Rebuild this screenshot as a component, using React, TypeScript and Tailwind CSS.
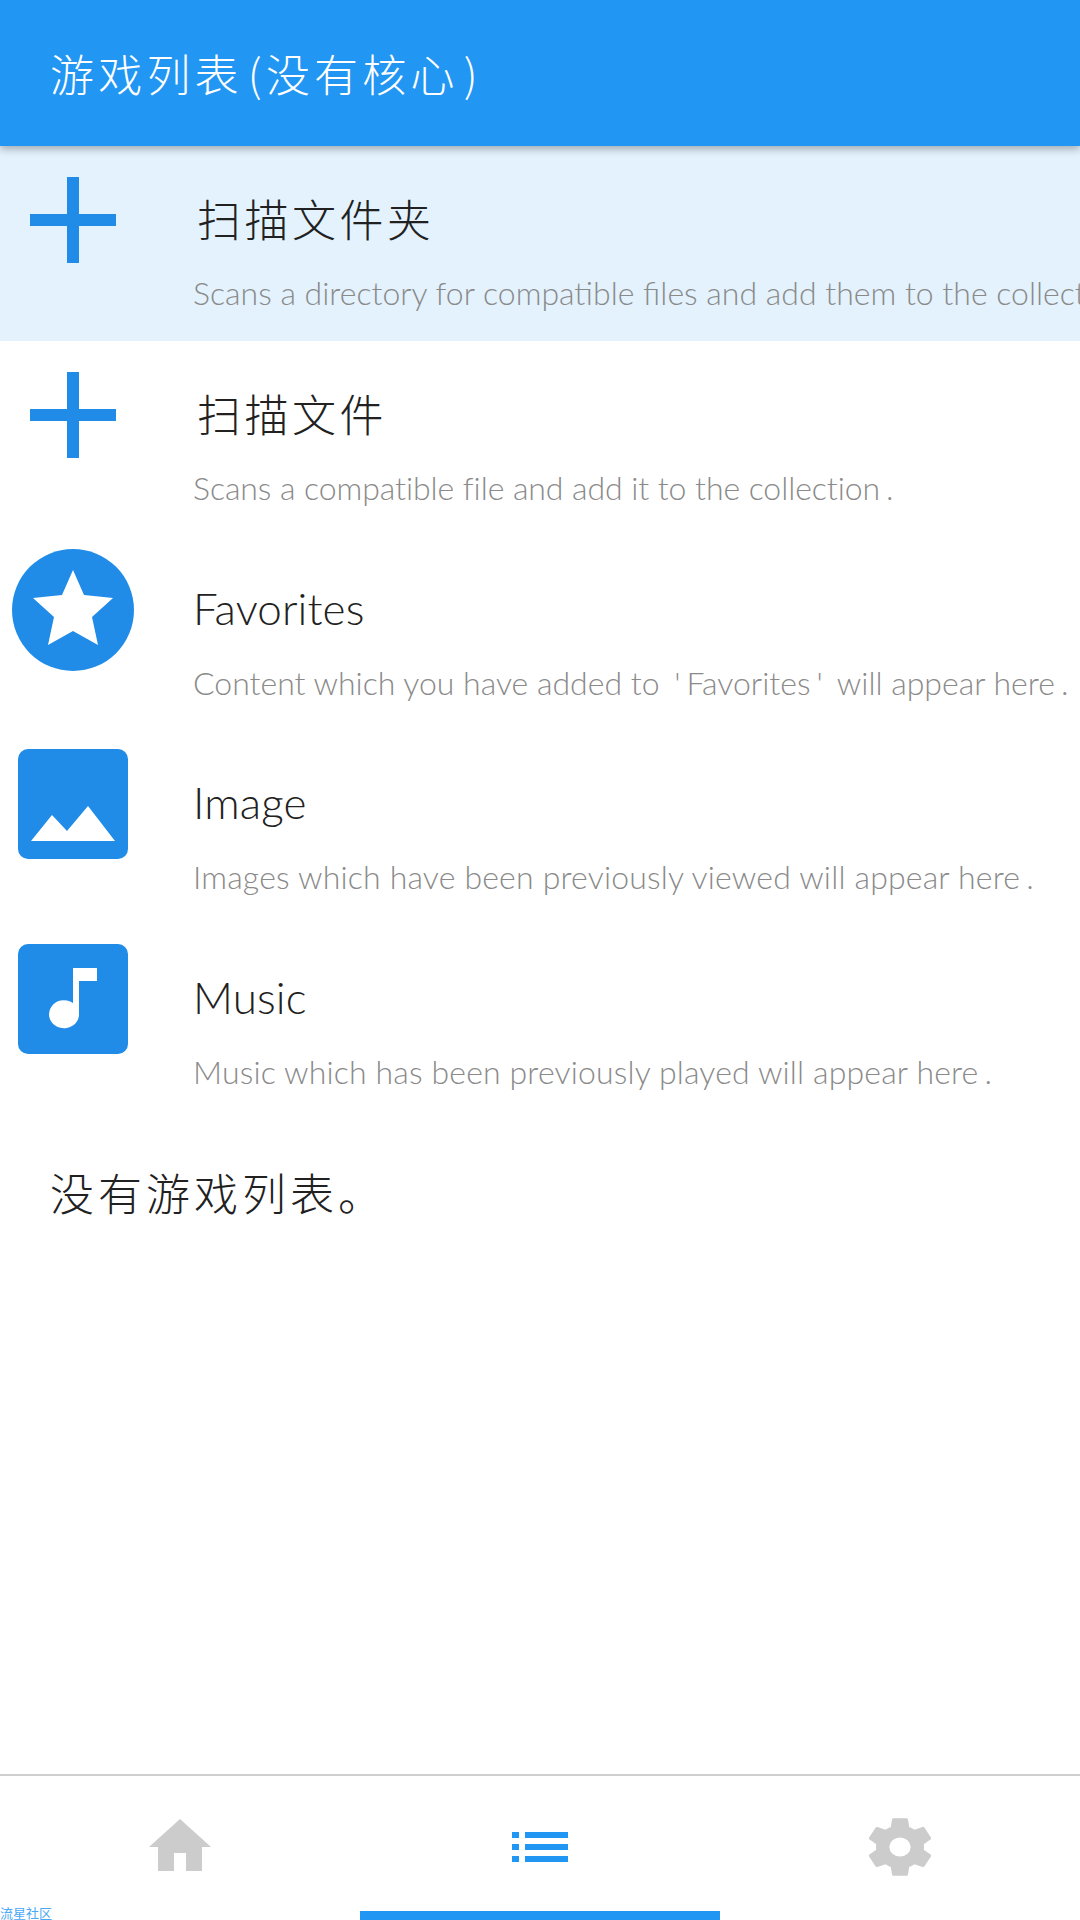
import React from "react";

const CJK = "font-['Noto_Sans_CJK_SC',sans-serif]";

interface RowData {
  title: string;
  desc: React.ReactNode;
  icon: React.ReactNode;
  active?: boolean;
  cjk?: boolean;
  tracking?: string;
}

const PlusIcon = () => (
  <svg width="86" height="86" viewBox="0 0 86 86" fill="#218ce8">
    <rect x="37" y="0" width="12" height="86" />
    <rect x="0" y="37" width="86" height="12" />
  </svg>
);

const StarIcon = () => (
  <svg width="122" height="122" viewBox="0 0 122 122">
    <circle cx="61" cy="61" r="61" fill="#218ce8" />
    <path d="M61 21 L72 46 L101 49 L80 68 L86 96 L61 82 L36 96 L42 68 L21 49 L50 46 Z" fill="#fff" />
  </svg>
);

const ImageIcon = () => (
  <svg width="110" height="110" viewBox="0 0 110 110">
    <rect width="110" height="110" rx="10" fill="#218ce8" />
    <path d="M13 92 L34 66 L49 82 L70 57 L97 92 Z" fill="#fff" />
  </svg>
);

const MusicIcon = () => (
  <svg width="110" height="110" viewBox="0 0 110 110">
    <rect width="110" height="110" rx="10" fill="#218ce8" />
    <path d="M55 24 H79 V37 H61 V71 A15 14 0 1 1 55 59 Z" fill="#fff" />
  </svg>
);

const Dot = () => <span className="ml-[6px]">.</span>;
const Quote = () => <span className="mx-[6px]">'</span>;

const rows: RowData[] = [
  {
    title: "扫描文件夹",
    desc: "Scans a directory for compatible files and add them to the collection.",
    icon: <PlusIcon />,
    active: true,
    cjk: true,
  },
  {
    title: "扫描文件",
    desc: (
      <>
        Scans a compatible file and add it to the collection
        <Dot />
      </>
    ),
    icon: <PlusIcon />,
    cjk: true,
    tracking: "tracking-[-0.07px]",
  },
  {
    title: "Favorites",
    desc: (
      <>
        Content which you have added to <Quote />
        Favorites
        <Quote /> will appear here
        <Dot />
      </>
    ),
    icon: <StarIcon />,
  },
  {
    title: "Image",
    desc: (
      <>
        Images which have been previously viewed will appear here
        <Dot />
      </>
    ),
    icon: <ImageIcon />,
    tracking: "tracking-[0.18px]",
  },
  {
    title: "Music",
    desc: (
      <>
        Music which has been previously played will appear here
        <Dot />
      </>
    ),
    icon: <MusicIcon />,
    tracking: "tracking-[0.15px]",
  },
];

const ListRow = ({ row }: { row: RowData }) => (
  <div className={`flex h-[194.75px] items-start overflow-hidden ${row.active ? "bg-[#e3f2fd]" : ""}`}>
    <div className="flex h-[148px] w-[146px] shrink-0 items-center justify-center">{row.icon}</div>
    <div className="ml-[47px] flex flex-col whitespace-nowrap pt-[42px]">
      <span
        className={
          row.cjk
            ? `${CJK} pl-[4px] text-[44px] leading-[60px] font-light tracking-[3.5px] text-[#212121]`
            : "font-['Lato',sans-serif] text-[44px] leading-[60px] font-light tracking-[0.1px] text-[#212121]"
        }
      >
        {row.title}
      </span>
      <span
        className={`mt-[23px] font-['Lato',sans-serif] text-[32px] leading-[44px] font-light text-[#8a8a8a] ${row.tracking ?? ""}`}
      >
        {row.desc}
      </span>
    </div>
  </div>
);

export default function App() {
  return (
    <div className="relative flex h-[1920px] w-[1080px] flex-col overflow-hidden bg-white">
      {/* Action bar */}
      <header className="z-10 flex h-[146px] shrink-0 items-center bg-[#2196f3] pl-[50px] shadow-[0_3px_8px_rgba(0,0,0,0.3)]">
        <h1 className={`${CJK} text-[44px] font-light tracking-[4.2px] text-white`}>
          游戏列表
          <span className="ml-[5px]">(</span>
          没有核心
          <span className="ml-[5px]">)</span>
        </h1>
      </header>

      <main className="flex-1">
        {rows.map((row) => (
          <ListRow key={row.title} row={row} />
        ))}
        <p className={`${CJK} mt-[42px] pl-[50px] text-[44px] leading-[60px] font-light tracking-[4px] text-[#212121]`}>
          没有游戏列表。
        </p>
      </main>

      {/* Bottom tabs */}
      <nav className="grid h-[146px] shrink-0 grid-cols-3 border-t-2 border-[#cfcfcf]">
        <div className="flex items-center justify-center pb-[6px]">
          <svg width="62" height="52" viewBox="0 0 62 52" fill="#cccccc">
            <path d="M31 0 L62 28 H53 V52 H37 V34 H25 V52 H9 V28 H0 Z" />
          </svg>
        </div>
        <div className="relative flex items-center justify-center pb-[2px]">
          <svg width="56" height="30" viewBox="0 0 56 30" fill="#2196f3">
            <rect x="0" y="0" width="7" height="6" />
            <rect x="13" y="0" width="43" height="6" />
            <rect x="0" y="12" width="7" height="6" />
            <rect x="13" y="12" width="43" height="6" />
            <rect x="0" y="24" width="7" height="6" />
            <rect x="13" y="24" width="43" height="6" />
          </svg>
          <div className="absolute right-0 bottom-0 left-0 h-[9px] bg-[#2196f3]" />
        </div>
        <div className="flex items-center justify-center pb-[2px]">
          <svg width="62" height="60" viewBox="2.7 2 18.6 20" preserveAspectRatio="none" fill="#cccccc">
            <path
              fillRule="evenodd"
              d="M19.14 12.94c.04-.3.06-.61.06-.94 0-.32-.02-.64-.07-.94l2.03-1.58a.49.49 0 0 0 .12-.61l-1.92-3.32a.488.488 0 0 0-.59-.22l-2.39.96c-.5-.38-1.03-.7-1.62-.94l-.36-2.54a.484.484 0 0 0-.48-.41h-3.84c-.24 0-.43.17-.47.41l-.36 2.54c-.59.24-1.13.57-1.62.94l-2.39-.96c-.22-.08-.47 0-.59.22L2.74 8.87c-.12.21-.08.47.12.61l2.03 1.58c-.05.3-.09.63-.09.94s.02.64.07.94l-2.03 1.58a.49.49 0 0 0-.12.61l1.92 3.32c.12.22.37.29.59.22l2.39-.96c.5.38 1.03.7 1.62.94l.36 2.54c.05.24.24.41.48.41h3.84c.24 0 .44-.17.47-.41l.36-2.54c.59-.24 1.13-.56 1.62-.94l2.39.96c.22.08.47 0 .59-.22l1.92-3.32c.12-.22.07-.47-.12-.61l-2.01-1.58zM12 15.2a3.2 3.2 0 1 1 0-6.4 3.2 3.2 0 0 1 0 6.4z"
            />
          </svg>
        </div>
      </nav>

      {/* Watermark */}
      <span className={`${CJK} absolute bottom-0 left-0 text-[13px] leading-[14px] text-[#4aa8f5]`}>流星社区</span>
    </div>
  );
}
